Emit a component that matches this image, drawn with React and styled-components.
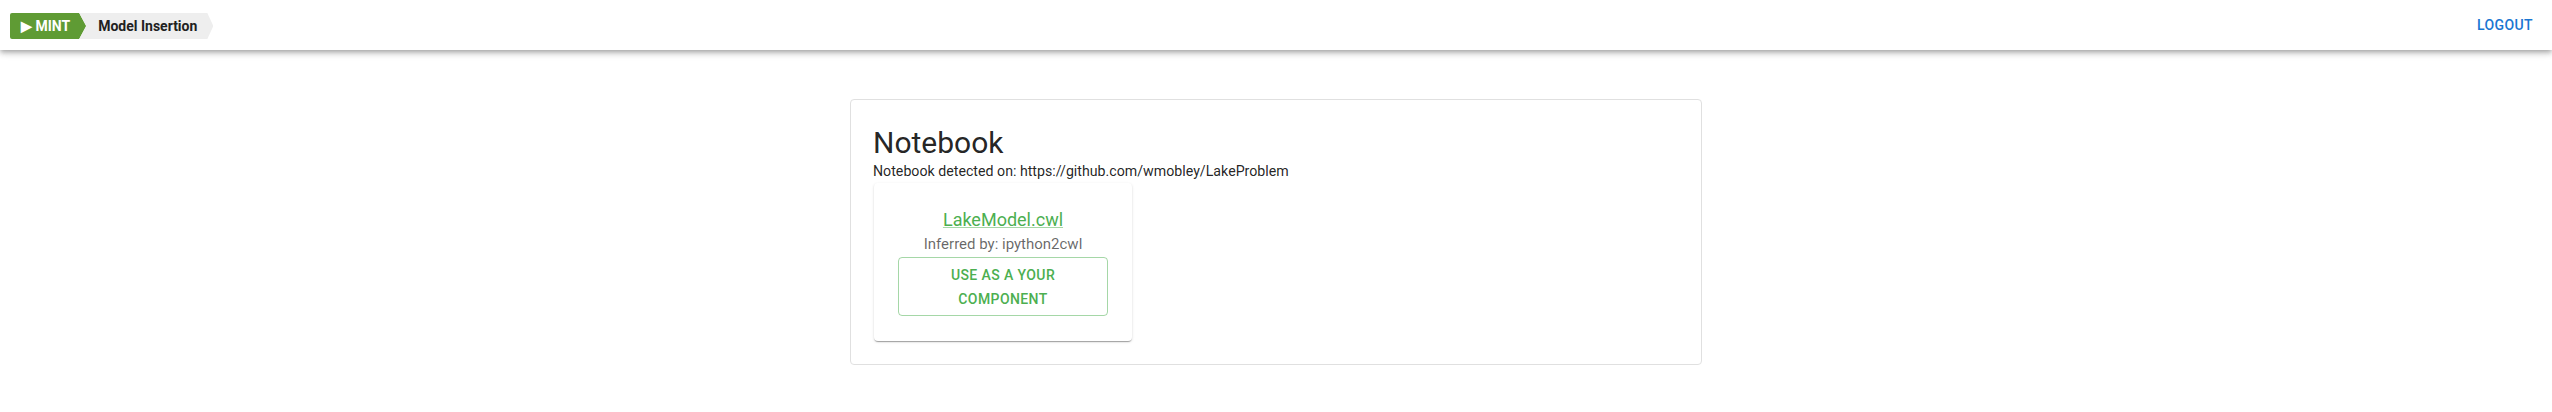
import styled, { createGlobalStyle } from "styled-components";

const GlobalStyle = createGlobalStyle`
  body {
    margin: 0;
    background: #ffffff;
    font-family: Roboto, "Liberation Sans", sans-serif;
    color: rgba(0, 0, 0, 0.87);
  }
`;

const Header = styled.header`
  height: 50px;
  display: flex;
  align-items: center;
  justify-content: space-between;
  padding: 0 11px 0 10px;
  background: #ffffff;
  box-shadow: 0px 2px 4px -1px rgba(0, 0, 0, 0.2),
    0px 4px 5px 0px rgba(0, 0, 0, 0.14), 0px 1px 10px 0px rgba(0, 0, 0, 0.12);
`;

const Crumbs = styled.nav`
  display: flex;
  align-items: center;
  margin-top: 2px;
`;

const Crumb = styled.div`
  height: 26px;
  display: flex;
  align-items: center;
  font-size: 14px;
  font-weight: 700;
  white-space: nowrap;
  background: ${(p) => (p.$home ? "#5f9b34" : "#eeeeee")};
  color: ${(p) => (p.$home ? "#ffffff" : "#212121")};
  padding: ${(p) => (p.$home ? "0 16px 0 11px" : "0 16px 0 19px")};
  margin-left: ${(p) => (p.$home ? "0" : "-7px")};
  border-radius: ${(p) => (p.$home ? "2px 0 0 2px" : "0")};
  clip-path: ${(p) =>
    p.$home
      ? "polygon(0 0, calc(100% - 7px) 0, 100% 50%, calc(100% - 7px) 100%, 0 100%)"
      : "polygon(0 0, calc(100% - 6px) 0, 100% 50%, calc(100% - 6px) 100%, 0 100%, 7px 50%)"};
`;

const Logout = styled.button`
  border: none;
  background: none;
  padding: 6px 8px;
  font-family: Roboto, "Liberation Sans", sans-serif;
  font-size: 14px;
  font-weight: 500;
  letter-spacing: 0.02857em;
  line-height: 1.75;
  text-transform: uppercase;
  color: #1976d2;
  cursor: pointer;
`;

const Main = styled.main`
  display: flex;
  justify-content: center;
  padding-top: 49px;
`;

const Panel = styled.section`
  width: 852px;
  box-sizing: border-box;
  border: 1px solid #e0e0e0;
  border-radius: 4px;
  padding: 25px 24px 23px 22px;
`;

const Title = styled.h2`
  margin: 0;
  font-size: 30px;
  font-weight: 400;
  line-height: 35.5px;
`;

const Detected = styled.p`
  margin: 0;
  font-size: 14.2px;
  line-height: 20px;
`;

const Cards = styled.div`
  display: flex;
  gap: 16px;
  margin-top: 2px;
  padding-left: 1px;
`;

const ModelCard = styled.div`
  width: 258px;
  box-sizing: border-box;
  padding: 25px 16px 25px;
  border-radius: 4px;
  background: #ffffff;
  box-shadow: 0px 2px 1px -1px rgba(0, 0, 0, 0.2),
    0px 1px 1px 0px rgba(0, 0, 0, 0.14), 0px 1px 3px 0px rgba(0, 0, 0, 0.12);
  display: flex;
  flex-direction: column;
  align-items: center;
  text-align: center;
`;

const ModelLink = styled.a`
  font-size: 18px;
  line-height: 24px;
  color: #4caf50;
  text-decoration: underline;
  text-decoration-color: rgba(76, 175, 80, 0.5);
`;

const Inferred = styled.div`
  font-size: 15px;
  line-height: 24px;
  color: rgba(0, 0, 0, 0.6);
`;

const UseButton = styled.button`
  align-self: stretch;
  margin: 1px 8px 0;
  padding: 5px 15px 4px;
  border: 1px solid rgba(76, 175, 80, 0.5);
  border-radius: 4px;
  background: transparent;
  font-family: Roboto, "Liberation Sans", sans-serif;
  font-size: 14px;
  font-weight: 500;
  letter-spacing: 0.02857em;
  line-height: 24px;
  text-transform: uppercase;
  color: #4caf50;
  cursor: pointer;
`;

export default function App() {
  return (
    <>
      <GlobalStyle />
      <Header>
        <Crumbs>
          <Crumb $home>▶ MINT</Crumb>
          <Crumb>Model Insertion</Crumb>
        </Crumbs>
        <Logout>Logout</Logout>
      </Header>
      <Main>
        <Panel>
          <Title>Notebook</Title>
          <Detected>
            Notebook detected on: https://github.com/wmobley/LakeProblem
          </Detected>
          <Cards>
            <ModelCard>
              <ModelLink href="#">LakeModel.cwl</ModelLink>
              <Inferred>Inferred by: ipython2cwl</Inferred>
              <UseButton>Use as a your component</UseButton>
            </ModelCard>
          </Cards>
        </Panel>
      </Main>
    </>
  );
}
